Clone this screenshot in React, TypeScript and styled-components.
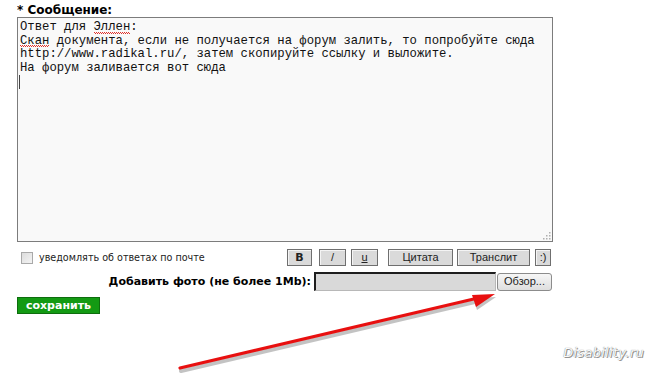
import React from 'react';
import styled, { createGlobalStyle } from 'styled-components';

const GlobalStyle = createGlobalStyle`
  html, body {
    margin: 0;
    padding: 0;
    background: #ffffff;
  }
  body {
    font-family: "DejaVu Sans", Verdana, sans-serif;
    color: #000000;
  }
`;

const Screen = styled.div`
  position: relative;
  width: 650px;
  height: 373px;
  overflow: hidden;
  background: #ffffff;
`;

const Form = styled.div`
  width: 536px;
  padding: 3px 0 0 17px;
  display: flex;
  flex-direction: column;
`;

const FieldLabel = styled.div`
  font-family: "DejaVu Sans", Verdana, sans-serif;
  font-weight: bold;
  font-size: 12px;
  line-height: 14px;
  height: 14px;
`;

const MessageBox = styled.div`
  position: relative;
  box-sizing: border-box;
  height: 225px;
  border: 1px solid #7c7c7c;
  background: #f9f9f9;
  padding: 3px 2px 0;
  font-family: "Liberation Mono", "Courier New", monospace;
  font-size: 12.25px;
  line-height: 13.5px;
  color: #111111;
  white-space: pre;
`;

const Misspelled = styled.span`
  position: relative;
  display: inline-block;

  &::after {
    content: '';
    position: absolute;
    left: 0;
    right: 0;
    bottom: 1px;
    height: 2px;
    background:
      linear-gradient(90deg, #e0302a 50%, transparent 50%) 0 0 / 2px 1px repeat-x,
      linear-gradient(90deg, transparent 50%, #e0302a 50%) 0 1px / 2px 1px repeat-x;
  }
`;

const Caret = styled.span`
  display: inline-block;
  width: 1px;
  height: 14px;
  background: #444444;
  vertical-align: top;
  margin-left: -1px;
`;

const ResizeGrip = styled.svg`
  position: absolute;
  right: 1px;
  bottom: 1px;
`;

const ToolRow = styled.div`
  display: flex;
  align-items: center;
  justify-content: space-between;
  margin-top: 7px;
  height: 17px;
  padding-right: 2px;
`;

const Notify = styled.label`
  display: flex;
  align-items: center;
  gap: 6px;
  padding-left: 4px;
  font-family: "DejaVu Sans", Verdana, sans-serif;
  font-size: 9.6px;
  color: #222222;
`;

const CheckBox = styled.span`
  display: inline-block;
  box-sizing: border-box;
  width: 12px;
  height: 12px;
  border: 1px solid #a9a9a9;
  background: linear-gradient(135deg, #dcdcdc, #f4f4f4);
`;

const Buttons = styled.div`
  display: flex;
  align-items: center;
`;

const ToolButton = styled.button<{ $w: number; $gap: number }>`
  box-sizing: border-box;
  width: ${(p) => p.$w}px;
  height: 17px;
  margin: 0 0 0 ${(p) => p.$gap}px;
  padding: 0;
  border: 1px solid #6f6f6f;
  box-shadow: inset 1px 1px 0 #f4f4f4;
  background: #dadada;
  font-family: "Liberation Sans", Tahoma, sans-serif;
  font-size: 11px;
  color: #222222;
  line-height: 15px;
`;

const Bold = styled.b`
  font-family: "DejaVu Sans", Verdana, sans-serif;
  font-size: 11px;
`;

const Under = styled.span`
  text-decoration: underline;
`;

const PhotoRow = styled.div`
  display: flex;
  align-items: center;
  justify-content: flex-end;
  margin-top: 6px;
  padding-right: 1px;
`;

const PhotoLabel = styled.span`
  font-family: "DejaVu Sans", Verdana, sans-serif;
  font-weight: bold;
  font-size: 11px;
  margin-right: 3px;
`;

const FileField = styled.div`
  box-sizing: border-box;
  width: 182px;
  height: 19px;
  background: #d9d9d9;
  border-top: 2px solid #1e1e1e;
  border-left: 2px solid #1e1e1e;
  border-right: 1px solid #b8b8b8;
  border-bottom: 1px solid #b8b8b8;
`;

const BrowseButton = styled.button`
  box-sizing: border-box;
  width: 55px;
  height: 18px;
  margin-left: 1px;
  padding: 0 0 1px;
  border: 1px solid #8c8c8c;
  border-radius: 3px;
  background: linear-gradient(#f6f6f6, #dedede);
  font-family: "Liberation Sans", Tahoma, sans-serif;
  font-size: 11px;
  color: #222222;
`;

const SaveButton = styled.button`
  align-self: flex-start;
  box-sizing: border-box;
  width: 83px;
  height: 17px;
  margin-top: 6px;
  padding: 0 0 1px;
  border: 1px solid #0d6d0d;
  background: #139a13;
  color: #ffffff;
  font-family: "DejaVu Sans", Verdana, sans-serif;
  font-weight: bold;
  font-size: 11px;
`;

const Annotation = styled.svg`
  position: absolute;
  left: 0;
  top: 0;
  pointer-events: none;
`;

const Watermark = styled.div`
  position: absolute;
  right: 6px;
  bottom: 13px;
  font-family: "DejaVu Sans", Verdana, sans-serif;
  font-style: italic;
  font-size: 13px;
  letter-spacing: 0.3px;
  color: #fbfbfb;
  text-shadow: 0 0 1px #5f5f5f, 1px 1px 0 #9a9a9a;
`;

const Arrow = () => (
  <Annotation width={650} height={373} viewBox="0 0 650 373">
    <g opacity={0.35} transform="translate(1 3)">
      <line x1={180} y1={368} x2={478} y2={298} stroke="#555" strokeWidth={4} strokeLinecap="round" />
      <polygon points="495,294 472,295 476,307" fill="#555" />
    </g>
    <line x1={180} y1={368} x2={478} y2={298} stroke="#e81010" strokeWidth={3.2} strokeLinecap="round" />
    <polygon points="495,294 472,295 476,307" fill="#e81010" />
  </Annotation>
);

const Grip = () => (
  <ResizeGrip width={10} height={10} viewBox="0 0 10 10">
    {[
      [8, 2],
      [5, 5],
      [8, 5],
      [2, 8],
      [5, 8],
      [8, 8],
    ].map(([x, y], i) => (
      <rect key={i} x={x} y={y} width={1.5} height={1.5} fill="#b0b0b0" />
    ))}
  </ResizeGrip>
);

export default function App() {
  return (
    <Screen>
      <GlobalStyle />
      <Form>
        <FieldLabel>* Сообщение:</FieldLabel>
        <MessageBox>
          {'Ответ для '}
          <Misspelled>Эллен</Misspelled>
          {':\n'}
          <Misspelled>Скан</Misspelled>
          {' документа, если не получается на форум залить, то попробуйте сюда\n'}
          {'http://www.radikal.ru/, затем скопируйте ссылку и выложите.\n'}
          {'На форум заливается вот сюда\n'}
          <Caret />
          <Grip />
        </MessageBox>
        <ToolRow>
          <Notify>
            <CheckBox />
            уведомлять об ответах по почте
          </Notify>
          <Buttons>
            <ToolButton $w={25} $gap={0}>
              <Bold>B</Bold>
            </ToolButton>
            <ToolButton $w={27} $gap={7}>
              /
            </ToolButton>
            <ToolButton $w={27} $gap={5}>
              <Under>u</Under>
            </ToolButton>
            <ToolButton $w={65} $gap={10}>
              Цитата
            </ToolButton>
            <ToolButton $w={73} $gap={4}>
              Транслит
            </ToolButton>
            <ToolButton $w={16} $gap={5}>
              :)
            </ToolButton>
          </Buttons>
        </ToolRow>
        <PhotoRow>
          <PhotoLabel>Добавить фото (не более 1Mb):</PhotoLabel>
          <FileField />
          <BrowseButton>Обзор...</BrowseButton>
        </PhotoRow>
        <SaveButton>сохранить</SaveButton>
      </Form>
      <Arrow />
      <Watermark>Disability.ru</Watermark>
    </Screen>
  );
}
